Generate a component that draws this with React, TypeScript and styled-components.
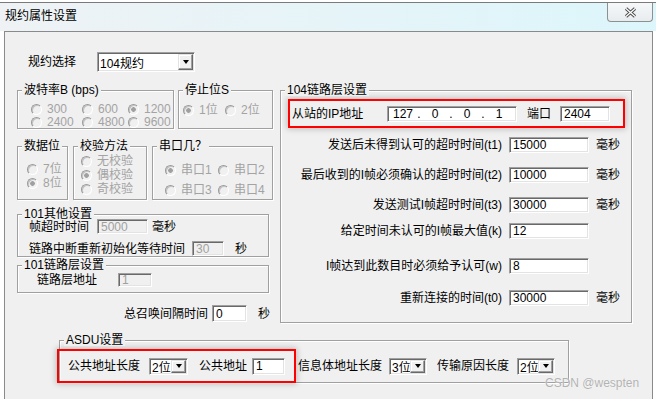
import React from "react";
import styled, { createGlobalStyle, css } from "styled-components";

const GlobalStyle = createGlobalStyle`
  html, body { margin: 0; padding: 0; background: #fff; }
  body {
    font-family: "Liberation Sans", "Noto Sans CJK SC", sans-serif;
    font-size: 12px;
    color: #000;
  }
  * { box-sizing: border-box; }
`;

const sunken = css`
  border: 1px solid;
  border-color: #a0a0a0 #ffffff #ffffff #a0a0a0;
  box-shadow: inset 1px 1px 0 #696969, inset -1px -1px 0 #e3e3e3;
`;

const Window = styled.div`
  position: relative;
  width: 656px;
  height: 399px;
  overflow: hidden;
  display: flex;
  flex-direction: column;
  padding-top: 2px;
  background: #fff;
`;

const TitleBar = styled.div`
  flex: none;
  height: 29px;
  border-top: 1px solid #7a7a7a;
  background: linear-gradient(to right, #eef2f5 0%, #e6f4f8 50%, #dcf6fb 100%);
  display: flex;
  align-items: flex-start;
  justify-content: space-between;
  padding-left: 5px;
`;

const Title = styled.span`
  margin-top: 5px;
  line-height: 16px;
  font-size: 12px;
`;

const CloseButton = styled.div`
  width: 46px;
  height: 19px;
  margin-right: 3px;
  border: 1px solid #8e8f8f;
  border-top: none;
  border-radius: 0 0 4px 4px;
  background: linear-gradient(#f6f8f9, #e7ecef);
  display: flex;
  align-items: center;
  justify-content: center;
`;

const Body = styled.div`
  flex: 1;
  margin: 0 3px 0 4px;
  border: 1px solid #8a8a8a;
  border-bottom: none;
  background: #f0f0f0;
`;

const Label = styled.span<{ $w?: number; $align?: "left" | "right"; $ml?: number }>`
  flex: none;
  width: ${(p) => (p.$w ? `${p.$w}px` : "auto")};
  margin-left: ${(p) => p.$ml ?? 0}px;
  text-align: ${(p) => p.$align ?? "left"};
  white-space: nowrap;
  line-height: 12px;
`;

const ProtocolRow = styled.div`
  display: flex;
  align-items: center;
  height: 20px;
  margin: 20px 0 0 23px;
`;

const Combo = styled.div<{ $w: number; $h: number; $ml?: number }>`
  ${sunken};
  flex: none;
  display: flex;
  width: ${(p) => p.$w}px;
  height: ${(p) => p.$h}px;
  margin-left: ${(p) => p.$ml ?? 0}px;
  padding: 1px;
  background: #fff;
`;

const ComboText = styled.span`
  flex: 1;
  min-width: 0;
  display: flex;
  align-items: center;
  padding-left: 1px;
  font-size: 12px;
  white-space: nowrap;
`;

const ComboButton = styled.span`
  flex: none;
  width: 15px;
  border: 1px solid;
  border-color: #e3e3e3 #696969 #696969 #e3e3e3;
  box-shadow: inset -1px -1px 0 #a0a0a0, inset 1px 1px 0 #fff;
  background: #f0f0f0;
  display: flex;
  align-items: center;
  justify-content: center;

  &::after {
    content: "";
    width: 0;
    height: 0;
    border-left: 3.5px solid transparent;
    border-right: 3.5px solid transparent;
    border-top: 4px solid #000;
  }
`;

const TextBox = styled.input<{ $w: number; $h: number; $ml?: number }>`
  ${sunken};
  flex: none;
  width: ${(p) => p.$w}px;
  height: ${(p) => p.$h}px;
  margin: 0 0 0 ${(p) => p.$ml ?? 0}px;
  padding: 0 3px;
  background: #fff;
  color: #000;
  font-family: "Liberation Sans", sans-serif;
  font-size: 12px;
  outline: none;

  &:disabled {
    background: #f0f0f0;
    color: #a0a0a0;
  }
`;

const MainRow = styled.div`
  display: flex;
  align-items: flex-start;
  margin-top: 18px;
`;

const LeftColumn = styled.div`
  display: flex;
  flex-direction: column;
  width: 256px;
  margin-left: 12px;
`;

const BoxRow = styled.div<{ $gap: number; $mt?: number }>`
  display: flex;
  gap: ${(p) => p.$gap}px;
  margin-top: ${(p) => p.$mt ?? 0}px;
`;

const GroupBox = styled.div<{ $w: number; $h: number; $mt?: number; $ml?: number; $pad?: string }>`
  position: relative;
  flex: none;
  width: ${(p) => p.$w}px;
  height: ${(p) => p.$h}px;
  margin-top: ${(p) => p.$mt ?? 0}px;
  margin-left: ${(p) => p.$ml ?? 0}px;
  padding: ${(p) => p.$pad ?? "0"};
  border: 1px solid #a0a0a0;
  box-shadow: 1px 1px 0 #fff, inset 1px 1px 0 #fff;
`;

const Legend = styled.span`
  position: absolute;
  top: -7px;
  left: 4px;
  padding: 0 2px;
  background: #f0f0f0;
  line-height: 12px;
  white-space: nowrap;
`;

const RadioGrid = styled.div<{ $cols: string; $row: number; $gap?: number }>`
  display: grid;
  grid-template-columns: ${(p) => p.$cols};
  grid-auto-rows: ${(p) => p.$row}px;
  row-gap: ${(p) => p.$gap ?? 0}px;
  align-items: center;
`;

const RadioOption = styled.span`
  display: flex;
  align-items: center;
  gap: 5px;
  color: #a3a3a3;
  white-space: nowrap;
  font-size: 12px;
  line-height: 12px;
`;

const RadioMark = styled.span<{ $on?: boolean }>`
  flex: none;
  width: 11px;
  height: 11px;
  border-radius: 50%;
  border: 1px solid;
  border-color: #9a9a9a #ffffff #ffffff #9a9a9a;
  box-shadow: inset 1px 1px 0 #c4c4c4;
  background: ${(p) =>
    p.$on ? "radial-gradient(circle, #a0a0a0 0 2px, #f0f0f0 2.6px)" : "#f0f0f0"};
`;

const FormLine = styled.div<{ $h: number; $mt?: number }>`
  display: flex;
  align-items: center;
  height: ${(p) => p.$h}px;
  margin-top: ${(p) => p.$mt ?? 0}px;
`;

const TotalRow = styled.div`
  display: flex;
  align-items: center;
  height: 17px;
  margin-top: 12px;
  padding-left: 107px;
`;

const RedFrame = styled.div<{ $w?: number; $h: number; $ml?: number; $pad: string }>`
  flex: none;
  display: flex;
  align-items: center;
  width: ${(p) => (p.$w ? `${p.$w}px` : "auto")};
  height: ${(p) => p.$h}px;
  margin-left: ${(p) => p.$ml ?? 0}px;
  padding: ${(p) => p.$pad};
  border: 2px solid #ff0000;
  box-shadow: 0 0 6px 1px rgba(0, 0, 0, 0.22);
`;

const IpBox = styled.div`
  ${sunken};
  flex: none;
  display: flex;
  align-items: center;
  width: 130px;
  height: 16px;
  padding: 0 1px;
  background: #fff;
  font-size: 12px;
`;

const IpField = styled.span`
  width: 28px;
  text-align: center;
`;

const IpDot = styled.span`
  width: 4px;
  text-align: center;
`;

const ParamRow = styled.div<{ $mt: number }>`
  display: grid;
  grid-template-columns: 214px 80px auto;
  column-gap: 7px;
  align-items: center;
  height: 16px;
  margin-top: ${(p) => p.$mt}px;
`;

const AsduLine = styled.div`
  display: flex;
  align-items: center;
  padding-top: 8px;
`;

const Watermark = styled.span`
  position: absolute;
  left: 545px;
  top: 375px;
  color: #b2b2b2;
  font-size: 12px;
  line-height: 16px;
  text-shadow: 0 0 1px #fff;
`;

function Radio({ label, on }: { label: string; on?: boolean }) {
  return (
    <RadioOption>
      <RadioMark $on={on} />
      {label}
    </RadioOption>
  );
}

function Select({ value, w, h, ml }: { value: string; w: number; h: number; ml?: number }) {
  return (
    <Combo $w={w} $h={h} $ml={ml}>
      <ComboText>{value}</ComboText>
      <ComboButton />
    </Combo>
  );
}

const params = [
  { label: "发送后未得到认可的超时时间(t1)", value: "15000", unit: "毫秒", mt: 9 },
  { label: "最后收到的I帧必须确认的超时时间(t2)", value: "10000", unit: "毫秒", mt: 14 },
  { label: "发送测试I帧超时时间(t3)", value: "30000", unit: "毫秒", mt: 14 },
  { label: "给定时间未认可的I帧最大值(k)", value: "12", unit: "", mt: 10 },
  { label: "I帧达到此数目时必须给予认可(w)", value: "8", unit: "", mt: 19 },
  { label: "重新连接的时间(t0)", value: "30000", unit: "毫秒", mt: 16 },
];

export default function App() {
  return (
    <>
      <GlobalStyle />
      <Window>
        <TitleBar>
          <Title>规约属性设置</Title>
          <CloseButton>
            <svg width="13" height="11" viewBox="0 0 13 11">
              <path d="M2 1.5 L11 9.5 M11 1.5 L2 9.5" stroke="#4a4a4a" strokeWidth="3.2" />
              <path d="M2 1.5 L11 9.5 M11 1.5 L2 9.5" stroke="#fff" strokeWidth="1.3" />
            </svg>
          </CloseButton>
        </TitleBar>

        <Body>
          <ProtocolRow>
            <Label $w={69}>规约选择</Label>
            <Select value="104规约" w={98} h={20} />
          </ProtocolRow>

          <MainRow>
            <LeftColumn>
              <BoxRow $gap={4}>
                <GroupBox $w={157} $h={39} $pad="12px 0 0 13px">
                  <Legend>波特率B (bps)</Legend>
                  <RadioGrid $cols="51px 46px auto" $row={12} $gap={1}>
                    <Radio label="300" />
                    <Radio label="600" />
                    <Radio label="1200" on />
                    <Radio label="2400" />
                    <Radio label="4800" />
                    <Radio label="9600" />
                  </RadioGrid>
                </GroupBox>
                <GroupBox $w={95} $h={39} $pad="13px 0 0 4px">
                  <Legend>停止位S</Legend>
                  <RadioGrid $cols="42px auto" $row={12}>
                    <Radio label="1位" on />
                    <Radio label="2位" />
                  </RadioGrid>
                </GroupBox>
              </BoxRow>

              <BoxRow $gap={5} $mt={17}>
                <GroupBox $w={51} $h={54} $pad="15px 0 0 9px">
                  <Legend>数据位</Legend>
                  <RadioGrid $cols="auto" $row={14}>
                    <Radio label="7位" />
                    <Radio label="8位" on />
                  </RadioGrid>
                </GroupBox>
                <GroupBox $w={74} $h={54} $pad="7px 0 0 7px">
                  <Legend>校验方法</Legend>
                  <RadioGrid $cols="auto" $row={14}>
                    <Radio label="无校验" />
                    <Radio label="偶校验" on />
                    <Radio label="奇校验" />
                  </RadioGrid>
                </GroupBox>
                <GroupBox $w={121} $h={54} $pad="13px 0 0 12px">
                  <Legend>串口几？</Legend>
                  <RadioGrid $cols="53px auto" $row={20}>
                    <Radio label="串口1" on />
                    <Radio label="串口2" />
                    <Radio label="串口3" />
                    <Radio label="串口4" />
                  </RadioGrid>
                </GroupBox>
              </BoxRow>

              <GroupBox $w={252} $h={43} $mt={14} $pad="4px 0 0 11px">
                <Legend>101其他设置</Legend>
                <FormLine $h={15}>
                  <Label $w={68}>帧超时时间</Label>
                  <TextBox $w={51} $h={15} defaultValue="5000" disabled />
                  <Label $ml={4}>毫秒</Label>
                </FormLine>
                <FormLine $h={15} $mt={7}>
                  <Label $w={163}>链路中断重新初始化等待时间</Label>
                  <TextBox $w={32} $h={15} defaultValue="30" disabled />
                  <Label $ml={11}>秒</Label>
                </FormLine>
              </GroupBox>

              <GroupBox $w={252} $h={28} $mt={8} $pad="7px 0 0 19px">
                <Legend>101链路层设置</Legend>
                <FormLine $h={14}>
                  <Label $w={81}>链路层地址</Label>
                  <TextBox $w={34} $h={14} defaultValue="1" disabled />
                </FormLine>
              </GroupBox>

              <TotalRow>
                <Label $w={88}>总召唤间隔时间</Label>
                <TextBox $w={35} $h={17} defaultValue="0" readOnly />
                <Label $ml={11}>秒</Label>
              </TotalRow>
            </LeftColumn>

            <GroupBox $w={352} $h={233} $ml={7} $pad="8px 0 0 7px">
              <Legend>104链路层设置</Legend>
              <RedFrame $w={337} $h={29} $pad="0 0 0 2px">
                <Label $w={95}>从站的IP地址</Label>
                <IpBox>
                  <IpField>127</IpField>
                  <IpDot>.</IpDot>
                  <IpField>0</IpField>
                  <IpDot>.</IpDot>
                  <IpField>0</IpField>
                  <IpDot>.</IpDot>
                  <IpField>1</IpField>
                </IpBox>
                <Label $w={33} $ml={10}>端口</Label>
                <TextBox $w={50} $h={16} defaultValue="2404" readOnly />
              </RedFrame>
              {params.map((p) => (
                <ParamRow key={p.label} $mt={p.mt}>
                  <Label $align="right">{p.label}</Label>
                  <TextBox $w={80} $h={16} defaultValue={p.value} readOnly />
                  <Label>{p.unit}</Label>
                </ParamRow>
              ))}
            </GroupBox>
          </MainRow>

          <GroupBox $w={510} $h={43} $mt={17} $ml={54}>
            <Legend>ASDU设置</Legend>
            <AsduLine>
              <RedFrame $h={34} $ml={-3} $pad="0 9px 0 9px">
                <Label $w={81}>公共地址长度</Label>
                <Select value="2位" w={39} h={17} />
                <Label $w={53} $ml={11}>公共地址</Label>
                <TextBox $w={33} $h={17} defaultValue="1" readOnly />
              </RedFrame>
              <Label $w={91} $ml={2}>信息体地址长度</Label>
              <Select value="3位" w={38} h={17} />
              <Label $w={80} $ml={10}>传输原因长度</Label>
              <Select value="2位" w={38} h={17} />
            </AsduLine>
          </GroupBox>
        </Body>

        <Watermark>CSDN @wespten</Watermark>
      </Window>
    </>
  );
}
